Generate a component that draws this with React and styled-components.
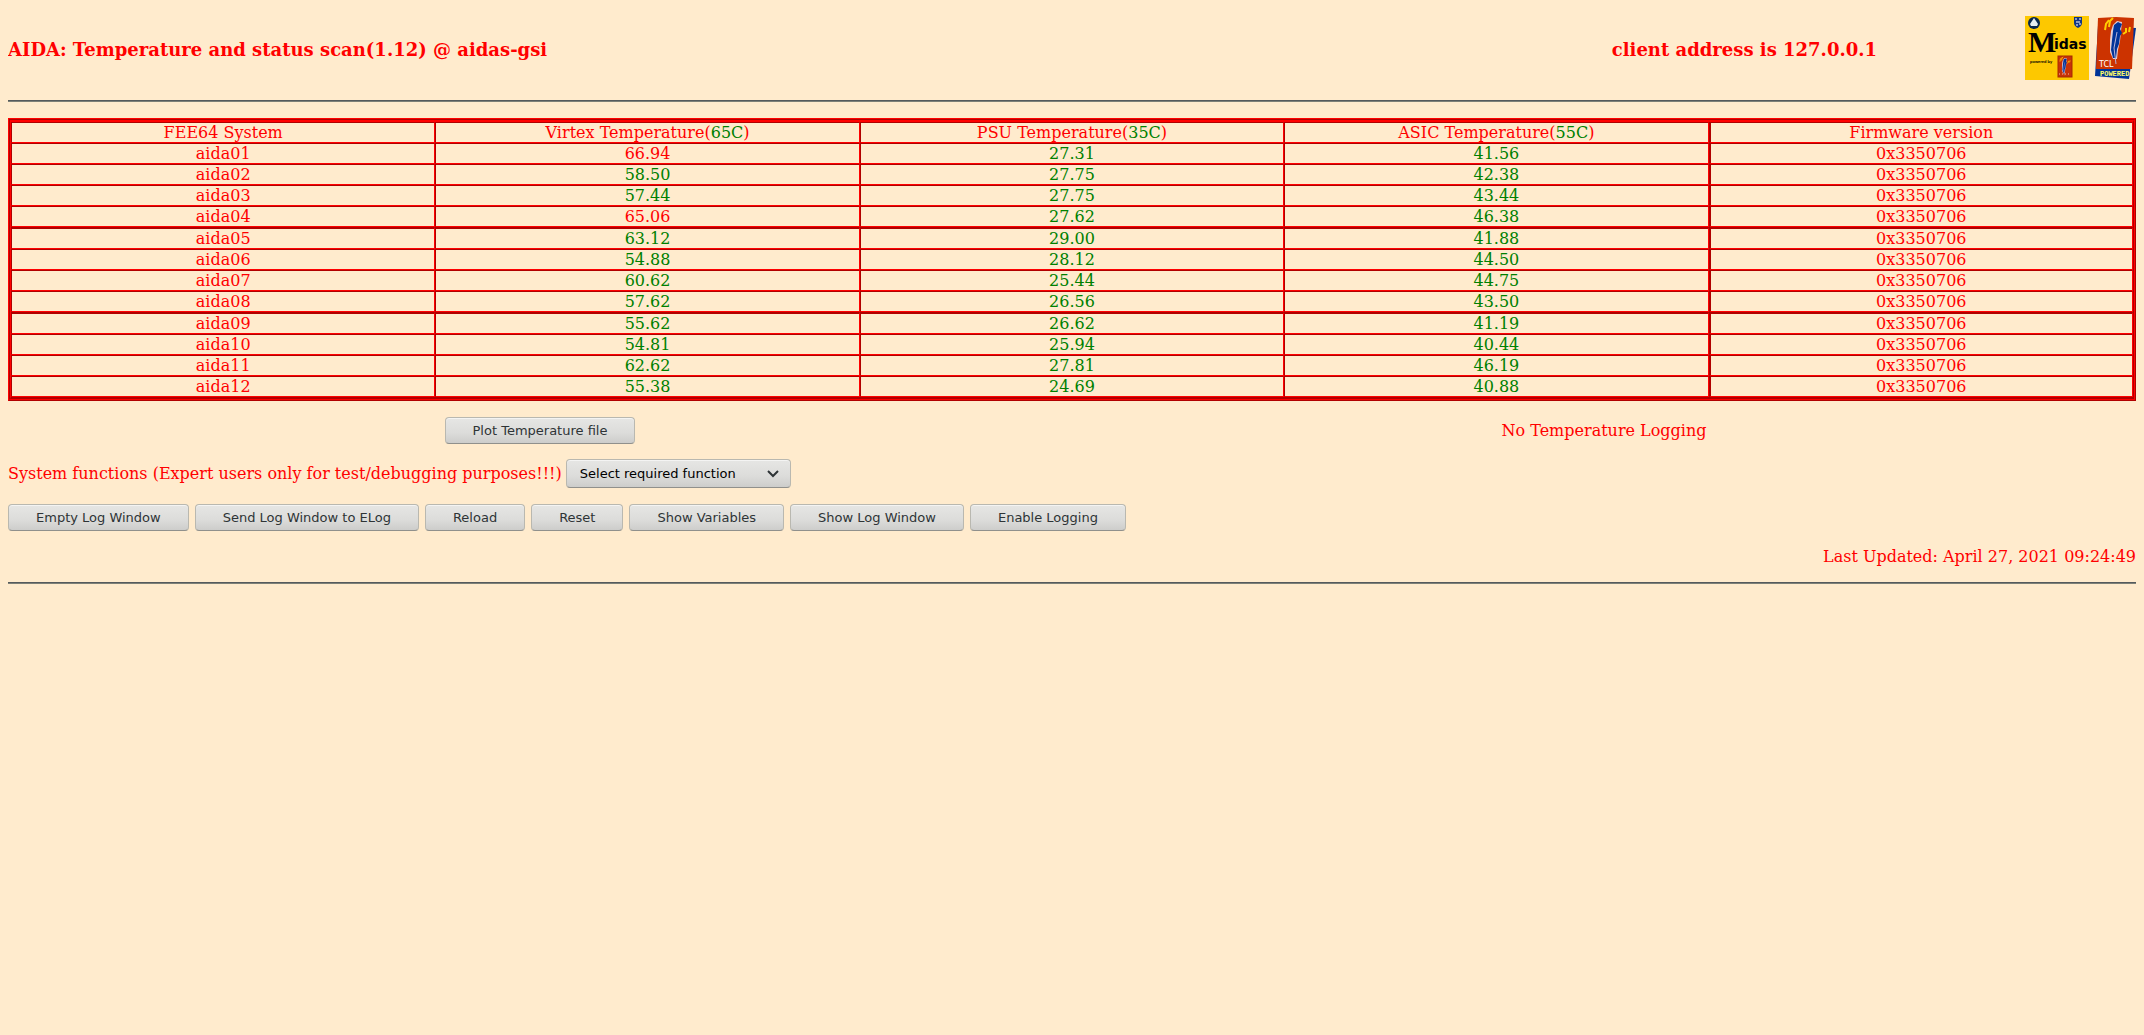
import React from "react";
import styled, { createGlobalStyle } from "styled-components";

const Global = createGlobalStyle`
  * { box-sizing: border-box; }
  body {
    margin: 8px;
    background: #ffebcd;
    color: #ff0000;
    font: 16px/19px "DejaVu Serif", serif;
  }
`;

const Header = styled.header`
  display: grid;
  grid-template-columns: 1fr auto 144px 115px;
  align-items: center;
  height: 84px;
`;
const Title = styled.h1`
  margin: 0;
  font-size: 18px;
  line-height: 22px;
`;
const Client = styled.h2`
  margin: 0;
  font-size: 18px;
  line-height: 22px;
`;
const Logos = styled.div`
  grid-column: 4;
  align-self: start;
  display: flex;
  justify-content: flex-end;
  gap: 6px;
  padding-top: 8px;
  svg { display: block; }
`;
const Rule = styled.hr`
  height: 2px;
  margin: 8px 0;
  border: 0;
  border-top: 1px solid #555a5c;
  background: #7d8078;
`;
const Frame = styled.div`
  margin-top: 16px;
  border: 1px solid;
  border-color: #ff0000 #b00000 #b00000 #ff0000;
`;
const InnerFrame = styled.div`
  border: 1px solid;
  border-color: #b00000 #ff0000 #ff0000 #b00000;
`;
const ScanTable = styled.table`
  width: 100%;
  table-layout: fixed;
  border: solid;
  border-width: 2px 1px;
  border-color: #ff0000 #b00000 #b00000 #ff0000;
  border-spacing: 0;
  text-align: center;
  tbody tr:nth-child(4n + 5) > td {
    height: 22px;
    border-top-width: 2px;
  }
`;
const Cell = styled.td`
  padding: 0;
  height: 21px;
  border: 1px solid;
  border-color: #b00000 #ff0000 #ff0000 #b00000;
  color: ${(p) => (p.$ok ? "#008000" : "#ff0000")};
  &:last-child { border-left-width: 2px; }
`;
const HeadCell = styled(Cell)`
  font-weight: 400;
`;
const Limit = styled.span`
  color: #008000;
`;
const Status = styled.div`
  display: grid;
  grid-template-columns: 1fr 1fr;
  align-items: center;
  justify-items: center;
  margin-top: 16px;
`;
const Button = styled.button`
  height: 27px;
  padding: 0 27px;
  border: 1px solid #b9b8b0;
  border-bottom-color: #90908c;
  border-radius: 4px;
  background: linear-gradient(#e6e6e4, #dcdcda 60%, #cdcdcb);
  box-shadow: inset 0 1px #f4f4f3;
  color: #2e3436;
  font: 13px/15px "DejaVu Sans", sans-serif;
`;
const Functions = styled.div`
  display: flex;
  align-items: center;
  gap: 4px;
  margin-top: 15px;
`;
const SelectBox = styled.div`
  position: relative;
  svg { position: absolute; right: 12px; top: 11px; pointer-events: none; }
`;
const Select = styled.select`
  appearance: none;
  display: block;
  height: 29px;
  width: 225px;
  padding: 0 13px;
  border: 1px solid #b9b8b0;
  border-bottom-color: #90908c;
  border-radius: 4px;
  background: linear-gradient(#e6e6e4, #dcdcda 60%, #cdcdcb);
  box-shadow: inset 0 1px #f4f4f3;
  color: #000;
  font: 13px/15px "DejaVu Sans", sans-serif;
`;
const Toolbar = styled.div`
  display: flex;
  gap: 6px;
  margin-top: 16px;
`;
const Updated = styled.p`
  margin: 16px 0;
  text-align: right;
`;

const rows = [
  ["aida01", "66.94", "27.31", "41.56"],
  ["aida02", "58.50", "27.75", "42.38"],
  ["aida03", "57.44", "27.75", "43.44"],
  ["aida04", "65.06", "27.62", "46.38"],
  ["aida05", "63.12", "29.00", "41.88"],
  ["aida06", "54.88", "28.12", "44.50"],
  ["aida07", "60.62", "25.44", "44.75"],
  ["aida08", "57.62", "26.56", "43.50"],
  ["aida09", "55.62", "26.62", "41.19"],
  ["aida10", "54.81", "25.94", "40.44"],
  ["aida11", "62.62", "27.81", "46.19"],
  ["aida12", "55.38", "24.69", "40.88"],
];
const limits = [["Virtex", 65], ["PSU", 35], ["ASIC", 55]];
const actions = ["Empty Log Window", "Send Log Window to ELog", "Reload", "Reset", "Show Variables", "Show Log Window", "Enable Logging"];

const Feather = () => (
  <>
    <path d="M18 9 22 5 27 6 26 15 25 25 23 34 22 43 18 43 15 36 15 24 16 15Z" fill="#e3cfd6" />
    <path d="M19 9 23 6 27 8 25 13 27 17 25 20 24 28 22 33 21 42 18 42 16 34 17 24 18 15Z" fill="#003399" />
    <path d="M22 16 19 32 21 48" fill="none" stroke="#b9b4d8" />
    <path d="M14 4 11 8 10 14M18 2 15 5 14 11M31 12 31 16 28 18M35 11 34 16" fill="none" stroke="#ffcc00" strokeWidth="2" />
  </>
);

function MidasLogo() {
  return (
    <svg width="64" height="64" viewBox="0 0 64 64" role="img" aria-label="Midas">
      <rect width="64" height="64" fill="#fdc800" />
      <circle cx="9" cy="7" r="6" fill="#08284f" />
      <path d="M9 2 11 5 13 8 12 10H6L5 8 7 5Z" fill="#e5eef0" />
      <path d="M49 1H57V7Q57 10 53 12Q49 10 49 7Z" fill="#123585" />
      <path d="M50 3H52M54 3H56M51 6H55M51 9H53M54 8H56" stroke="#fff" />
      <text x="3" y="36" fontFamily="Liberation Serif, serif" fontWeight="700" fontSize="30" fill="#000">M</text>
      <text x="29" y="33" fontFamily="DejaVu Sans, sans-serif" fontWeight="700" fontSize="14" fill="#000">idas</text>
      <text x="5" y="47" fontFamily="Liberation Sans, sans-serif" fontWeight="700" fontSize="4" fill="#000">powered by</text>
      <rect x="33" y="40" width="14" height="21" fill="#c83208" stroke="#a52a00" strokeWidth="1" />
      <g transform="translate(31 40) scale(.4)"><Feather /></g>
      <path d="M34 58H46" stroke="#f0c4a0" strokeDasharray="1 2" />
    </svg>
  );
}
function TclLogo() {
  return (
    <svg width="41" height="64" viewBox="0 0 41 64" role="img" aria-label="TCL powered">
      <path d="M3 10 0 60 34 63 41 12Z" fill="#003399" />
      <path d="M3 2 21 1 39 2 37 53 1 53Z" fill="#cc3300" />
      <Feather />
      <text x="4" y="51" fontFamily="DejaVu Sans, sans-serif" fontSize="8" fill="#fff">TCL</text>
      <text x="5" y="60" fontFamily="Liberation Mono, monospace" fontWeight="700" fontSize="7" fill="#ffff66">POWERED</text>
    </svg>
  );
}

export default function App() {
  return (
    <>
      <Global />
      <Header>
        <Title>AIDA: Temperature and status scan(1.12) @ aidas-gsi</Title>
        <Client>client address is 127.0.0.1</Client>
        <Logos><MidasLogo /><TclLogo /></Logos>
      </Header>
      <Rule />
      <Frame>
        <InnerFrame>
          <ScanTable>
            <thead>
              <tr>
                <HeadCell as="th" scope="col">FEE64 System</HeadCell>
                {limits.map(([name, limit]) => (
                  <HeadCell as="th" scope="col" key={name}>{name} Temperature(<Limit>{limit}C</Limit>)</HeadCell>
                ))}
                <HeadCell as="th" scope="col">Firmware version</HeadCell>
              </tr>
            </thead>
            <tbody>
              {rows.map(([name, ...temps]) => (
                <tr key={name}>
                  <Cell>{name}</Cell>
                  {temps.map((t, i) => <Cell key={i} $ok={Number(t) < limits[i][1]}>{t}</Cell>)}
                  <Cell>0x3350706</Cell>
                </tr>
              ))}
            </tbody>
          </ScanTable>
        </InnerFrame>
      </Frame>
      <Status>
        <Button>Plot Temperature file</Button>
        <span>No Temperature Logging</span>
      </Status>
      <Functions>
        <label htmlFor="fn">System functions (Expert users only for test/debugging purposes!!!)</label>
        <SelectBox>
          <Select id="fn"><option>Select required function</option></Select>
          <svg width="12" height="8" viewBox="0 0 12 8"><path d="M1 1 6 6 11 1" fill="none" stroke="#2e3436" strokeWidth="2" /></svg>
        </SelectBox>
      </Functions>
      <Toolbar>{actions.map((a) => <Button key={a}>{a}</Button>)}</Toolbar>
      <Updated>Last Updated: April 27, 2021 09:24:49</Updated>
      <Rule />
    </>
  );
}
